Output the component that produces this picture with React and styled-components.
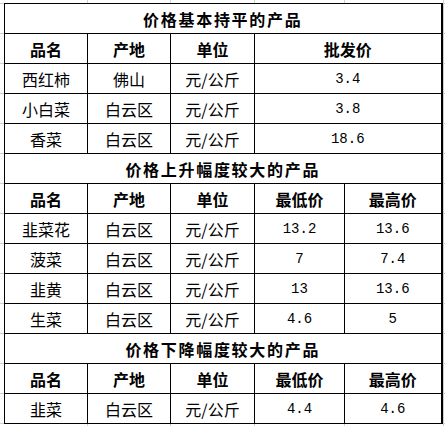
import styled, { createGlobalStyle } from "styled-components";

const GlobalStyle = createGlobalStyle`
  html, body {
    margin: 0;
    padding: 0;
    background-color: #fff;
  }
  body {
    width: 445px;
    height: 426px;
    overflow: hidden;
    font-family: "Noto Sans CJK SC", "Noto Sans", sans-serif;
    color: #000;
    /* spreadsheet grid lines peeking out around the table */
    background-image:
      linear-gradient(to right, transparent 87px, #d0d0d0 87px, #d0d0d0 88px, transparent 88px),
      linear-gradient(to right, transparent 170px, #d0d0d0 170px, #d0d0d0 171px, transparent 171px),
      linear-gradient(to right, transparent 254px, #d0d0d0 254px, #d0d0d0 255px, transparent 255px),
      linear-gradient(to right, transparent 344px, #d0d0d0 344px, #d0d0d0 345px, transparent 345px),
      linear-gradient(to right, transparent 443px, #d0d0d0 443px, #d0d0d0 444px, transparent 444px),
      repeating-linear-gradient(to bottom, #d0d0d0 0, #d0d0d0 1px, transparent 1px, transparent 30px);
    background-position: 0 0, 0 0, 0 0, 0 0, 0 0, 0 3px;
  }
`;

const sections = [
  {
    title: "价格基本持平的产品",
    headers: ["品名", "产地", "单位", "批发价"],
    rows: [
      ["西红柿", "佛山", "元/公斤", "3.4"],
      ["小白菜", "白云区", "元/公斤", "3.8"],
      ["香菜", "白云区", "元/公斤", "18.6"],
    ],
  },
  {
    title: "价格上升幅度较大的产品",
    headers: ["品名", "产地", "单位", "最低价", "最高价"],
    rows: [
      ["韭菜花", "白云区", "元/公斤", "13.2", "13.6"],
      ["菠菜", "白云区", "元/公斤", "7", "7.4"],
      ["韭黄", "白云区", "元/公斤", "13", "13.6"],
      ["生菜", "白云区", "元/公斤", "4.6", "5"],
    ],
  },
  {
    title: "价格下降幅度较大的产品",
    headers: ["品名", "产地", "单位", "最低价", "最高价"],
    rows: [["韭菜", "白云区", "元/公斤", "4.4", "4.6"]],
  },
];

const columnWidths = [83, 83, 84, 90, 97];

export default function App() {
  return (
    <>
      <GlobalStyle />
      <StyledSheet>
        <StyledTable>
          <colgroup>
            {columnWidths.map((width, index) => (
              <col key={index} style={{ width }} />
            ))}
          </colgroup>
          <tbody>
            {sections.map((section) => (
              <SectionRows key={section.title} section={section} />
            ))}
          </tbody>
        </StyledTable>
      </StyledSheet>
    </>
  );
}

function SectionRows({ section }) {
  const span = section.headers.length === 4 ? 2 : 1;
  return (
    <>
      <StyledRow>
        <StyledTitleCell colSpan={5}>{section.title}</StyledTitleCell>
      </StyledRow>
      <StyledRow>
        {section.headers.map((header, index) => (
          <StyledHeaderCell key={header} colSpan={index === 3 ? span : 1}>
            {header}
          </StyledHeaderCell>
        ))}
      </StyledRow>
      {section.rows.map((row) => (
        <StyledRow key={row[0]}>
          {row.map((value, index) => (
            <StyledCell
              key={index}
              colSpan={index === 3 ? span : 1}
              $numeric={index >= 3}
            >
              {value}
            </StyledCell>
          ))}
        </StyledRow>
      ))}
    </>
  );
}

const StyledSheet = styled.div`
  padding: 3px 0 0 4px;
`;

const StyledTable = styled.table`
  border-collapse: collapse;
  table-layout: fixed;
  width: 438px;
  background-color: #fff;
  border-right: 2px solid #000;
`;

const StyledRow = styled.tr`
  height: 30px;
`;

const StyledCell = styled.td`
  border: 1px solid #000;
  padding: 0;
  text-align: center;
  vertical-align: middle;
  font-size: ${(props) => (props.$numeric ? "14px" : "16px")};
  font-family: ${(props) =>
    props.$numeric
      ? '"Liberation Mono", monospace'
      : '"Noto Sans CJK SC", sans-serif'};
  font-weight: 400;
  line-height: 1;
  white-space: nowrap;
`;

const StyledHeaderCell = styled(StyledCell)`
  font-weight: 700;
  font-size: 16px;
  font-family: "Noto Sans CJK SC", sans-serif;
`;

const StyledTitleCell = styled(StyledCell)`
  font-weight: 700;
  font-size: 16px;
  letter-spacing: 1.7px;
  font-family: "Noto Sans CJK SC", sans-serif;
`;
